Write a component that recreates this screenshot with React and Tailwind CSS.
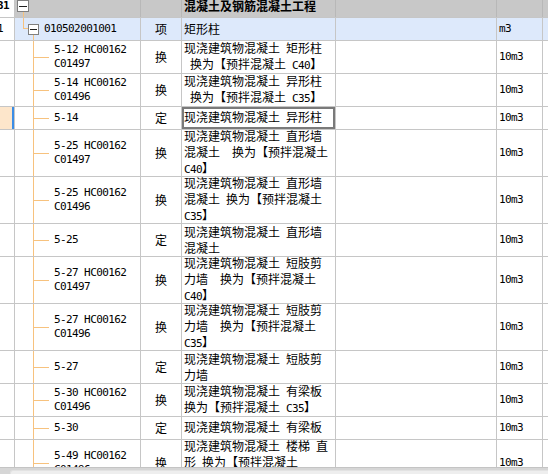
import React from "react";

const LINE = "border-[#c6c6c6]";
const TREE = "bg-[#f7c27e]";

// ASCII runs get a narrow mono face so they sit at half the CJK width
function mix(str) {
  return str
    .split(/([\x20-\x7e]+)/)
    .filter(Boolean)
    .map((p, i) =>
      /^[\x20-\x7e]+$/.test(p) ? (
        <span key={i} className="font-['DejaVu_Sans_Mono'] text-[11px] tracking-[-0.6px]">
          {p}
        </span>
      ) : (
        <span key={i}>{p}</span>
      )
    );
}

const rows = [
  { code: ["5-12 HC00162", "C01497"], t: "换", name: ["现浇建筑物混凝土 矩形柱", " 换为【预拌混凝土 C40】"], h: "h-[33px]" },
  { code: ["5-14 HC00162", "C01496"], t: "换", name: ["现浇建筑物混凝土 异形柱", " 换为【预拌混凝土 C35】"], h: "h-[33px]" },
  { code: ["5-14"], t: "定", name: ["现浇建筑物混凝土 异形柱"], h: "h-[23px]", sel: true },
  { code: ["5-25 HC00162", "C01497"], t: "换", name: ["现浇建筑物混凝土 直形墙", "混凝土  换为【预拌混凝土", "C40】"], h: "h-[47px]" },
  { code: ["5-25 HC00162", "C01496"], t: "换", name: ["现浇建筑物混凝土 直形墙", "混凝土 换为【预拌混凝土", "C35】"], h: "h-[47px]" },
  { code: ["5-25"], t: "定", name: ["现浇建筑物混凝土 直形墙", "混凝土"], h: "h-[33px]" },
  { code: ["5-27 HC00162", "C01497"], t: "换", name: ["现浇建筑物混凝土 短肢剪", "力墙  换为【预拌混凝土", "C40】"], h: "h-[47px]" },
  { code: ["5-27 HC00162", "C01496"], t: "换", name: ["现浇建筑物混凝土 短肢剪", "力墙  换为【预拌混凝土", "C35】"], h: "h-[47px]" },
  { code: ["5-27"], t: "定", name: ["现浇建筑物混凝土 短肢剪", "力墙"], h: "h-[33px]" },
  { code: ["5-30 HC00162", "C01496"], t: "换", name: ["现浇建筑物混凝土 有梁板", "换为【预拌混凝土 C35】"], h: "h-[33px]" },
  { code: ["5-30"], t: "定", name: ["现浇建筑物混凝土 有梁板"], h: "h-[23px]" },
  { code: ["5-49 HC00162", "C01496"], t: "换", name: ["现浇建筑物混凝土 楼梯 直", "形 换为【预拌混凝土", "C25】"], h: "h-[47px]" },
];

function Box({ size }) {
  return (
    <div
      className={`${size === 12 ? "w-[12px] h-[12px]" : "w-[11px] h-[11px]"} shrink-0 border border-[#7f7f7f] bg-white flex items-center justify-center`}
    >
      <div className={`${size === 12 ? "w-[8px]" : "w-[7px]"} h-px bg-[#202020]`} />
    </div>
  );
}

function ItemRow({ r }) {
  return (
    <div className={`flex shrink-0 border-b ${LINE} ${r.h}`}>
      <div className={`w-[15px] shrink-0 border-r ${LINE} flex ${r.sel ? "bg-[#fde6cb]" : ""}`}>
        {r.sel && <div className="ml-auto w-[2px] bg-[#3b8de6]" />}
      </div>
      <div className={`w-[126px] shrink-0 border-r ${LINE} flex`}>
        <div className="w-[18px] shrink-0" />
        <div className="w-[16px] shrink-0 border-l border-[#f7c27e] flex items-center">
          <div className={`h-px w-full ${TREE}`} />
        </div>
        <div className="flex flex-col justify-center pl-[5px] font-['DejaVu_Sans_Mono'] text-[11px] tracking-[-0.6px] leading-[14px] whitespace-pre">
          {r.code.map((c) => (
            <div key={c}>{c}</div>
          ))}
        </div>
      </div>
      <div className={`w-[41px] shrink-0 border-r ${LINE} flex items-center justify-center`}>{r.t}</div>
      <div className={`w-[154px] shrink-0 border-r ${LINE} flex`}>
        <div
          className={`flex-1 flex flex-col justify-center overflow-hidden whitespace-pre ${
            r.sel ? "border-2 border-[#7a7a7a] pl-0" : "pl-[2px]"
          }`}
        >
          {r.name.map((n, i) => (
            <div key={i}>{mix(n)}</div>
          ))}
        </div>
      </div>
      <div className={`w-[161px] shrink-0 border-r ${LINE}`} />
      <div className={`w-[46px] shrink-0 border-r ${LINE} flex items-center pl-[2px] font-['DejaVu_Sans_Mono'] text-[11px] tracking-[-0.6px]`}>
        10m3
      </div>
      <div className="flex-1" />
    </div>
  );
}

export default function App() {
  return (
    <div className="w-[548px] h-[474px] overflow-hidden flex flex-col bg-white text-black font-['Noto_Sans_CJK_SC',sans-serif] text-[12px] leading-[14px]">
      <div className="flex-1 min-h-0 overflow-hidden flex flex-col">
        {/* header: 混凝土及钢筋混凝土工程 */}
        <div className={`-mt-[5px] h-[23px] shrink-0 flex border-b ${LINE}`}>
          <div className={`w-[15px] shrink-0 border-r ${LINE} flex items-center font-bold text-[12px]`}>
            <span className="-ml-[3px] font-['DejaVu_Sans_Mono'] text-[11px] tracking-[-0.6px]">31</span>
          </div>
          <div className={`w-[126px] shrink-0 border-r border-[#b8b8b8] bg-[#c8c8c8] flex`}>
            <div className="w-[2px] shrink-0" />
            <div className="flex flex-col w-[12px] shrink-0">
              <div className="flex-1" />
              <Box size={12} />
              <div className="flex-1 flex justify-center">
                <div className={`w-px ${TREE}`} />
              </div>
            </div>
          </div>
          <div className="w-[41px] shrink-0 border-r border-[#b8b8b8] bg-[#c8c8c8]" />
          <div className="w-[154px] shrink-0 border-r border-[#b8b8b8] bg-[#c8c8c8] flex items-center pl-[2px] font-bold whitespace-nowrap">
            混凝土及钢筋混凝土工程
          </div>
          <div className="w-[161px] shrink-0 border-r border-[#b8b8b8] bg-[#c8c8c8]" />
          <div className="w-[46px] shrink-0 border-r border-[#b8b8b8] bg-[#c8c8c8]" />
          <div className="flex-1 bg-[#c8c8c8]" />
        </div>

        {/* item row 010502001001 */}
        <div className={`h-[23px] shrink-0 flex border-b ${LINE}`}>
          <div className={`w-[15px] shrink-0 border-r ${LINE} flex items-center`}>
            <span className="-ml-[3px] font-['DejaVu_Sans_Mono'] text-[11px] tracking-[-0.6px]">1</span>
          </div>
          <div className={`w-[126px] shrink-0 border-r ${LINE} bg-[#dde9fb] flex`}>
            <div className="w-[8px] shrink-0" />
            <div className="w-[5px] shrink-0 flex flex-col">
              <div className="h-[11px] border-l border-b border-[#f7c27e]" />
            </div>
            <div className="flex flex-col w-[11px] shrink-0">
              <div className="flex-1" />
              <Box size={11} />
              <div className="flex-1 flex justify-center">
                <div className={`w-px ${TREE}`} />
              </div>
            </div>
            <div className="flex items-center pl-[5px] font-['DejaVu_Sans_Mono'] text-[11px] tracking-[-0.6px]">
              010502001001
            </div>
          </div>
          <div className={`w-[41px] shrink-0 border-r ${LINE} bg-[#dde9fb] flex items-center justify-center`}>项</div>
          <div className={`w-[154px] shrink-0 border-r ${LINE} bg-[#dde9fb] flex items-center pl-[2px]`}>矩形柱</div>
          <div className={`w-[161px] shrink-0 border-r ${LINE} bg-[#dde9fb]`} />
          <div className={`w-[46px] shrink-0 border-r ${LINE} bg-[#dde9fb] flex items-center pl-[2px] font-['DejaVu_Sans_Mono'] text-[11px] tracking-[-0.6px]`}>
            m3
          </div>
          <div className="flex-1 bg-[#dde9fb]" />
        </div>

        {rows.map((r, i) => (
          <ItemRow key={i} r={r} />
        ))}
      </div>

      {/* horizontal scrollbar */}
      <div className="h-[7px] shrink-0 bg-[#d6d6d6] border-t border-[#c4c4c4] flex">
        <div className="ml-[10px] mt-[2px] flex-1 bg-[#eeeeee] rounded-tl-[3px] border-t border-l border-[#e2e2e2]" />
      </div>
    </div>
  );
}
